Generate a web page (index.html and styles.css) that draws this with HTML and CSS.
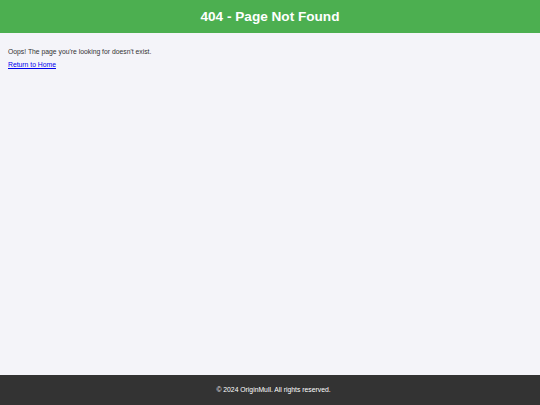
FILE: index.html
```html
<!DOCTYPE html>
<html lang="en">
<head>
<meta charset="utf-8">
<title>404 - Page Not Found</title>
<link rel="stylesheet" href="styles.css">
</head>
<body>
<header class="site-header">
  <h1 class="title">404 - Page Not Found</h1>
</header>
<main class="content">
  <p class="message">Oops! The page you're looking for doesn't exist.</p>
  <p class="message"><a href="#" class="home-link">Return to Home</a></p>
</main>
<footer class="site-footer">
  <p class="copy">© 2024 OriginMull. All rights reserved.</p>
</footer>
</body>
</html>
```

FILE: styles.css
```css
html, body {
  margin: 0;
  padding: 0;
  height: 100%;
}
body {
  font-family: "Liberation Sans", Arial, sans-serif;
  font-size: 6.8px;
  background: #f4f4f9;
  color: #333;
  display: flex;
  flex-direction: column;
  min-height: 100vh;
}
.site-header {
  background: #4caf50;
  color: #fff;
  text-align: center;
  padding: 8.5px 0;
}
.title {
  margin: 0;
  font-size: 13.6px;
  font-weight: bold;
  line-height: 15.5px;
}
.content {
  flex: 1;
  padding: 9.4px 8px;
}
.message {
  margin: 5.7px 0;
  line-height: 7.8px;
}
.home-link {
  color: #0000ee;
}
.site-footer {
  background: #333;
  color: #fff;
  text-align: center;
  padding: 11px 0 11px 7px;
}
.copy {
  margin: 0;
  line-height: 8px;
}
```
